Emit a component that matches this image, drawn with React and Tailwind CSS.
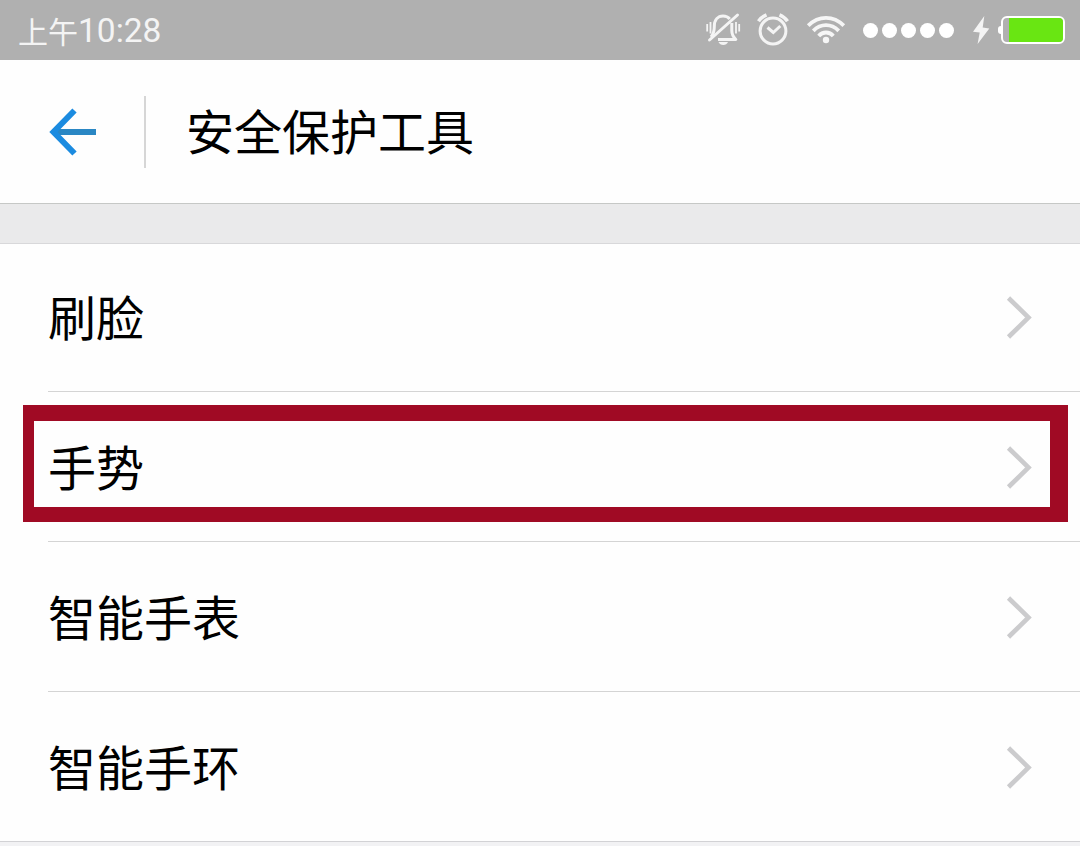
import React from 'react';

const tools = [
  { id: 'face', label: '刷脸' },
  { id: 'gesture', label: '手势', highlighted: true },
  { id: 'watch', label: '智能手表' },
  { id: 'band', label: '智能手环' },
];

const MuteIcon = () => (
  <svg className="w-10 h-[60px]" viewBox="0 0 40 60" fill="none" stroke="#f4f4f4" strokeWidth="3" aria-hidden="true">
    <path d="M7 37c2.500-3 3.300-5 3.300-10.500c0-6.500 3.600-10.500 8.700-10.500c3.300 0 5.300 1.200 6.800 3" />
    <path d="M27.800 23v7.500c0 4 1.500 6.500 4 9H14" strokeLinejoin="round" />
    <path d="M33.500 15L5.500 40" strokeWidth="3" strokeLinecap="round" />
    <path d="M14.500 42h9.500c-.8 2-2.600 3-4.700 3s-4-1-4.800-3z" fill="#f4f4f4" stroke="none" />
    <path d="M3.200 24v7.500M6.500 22v11.500M32 22v11.500M35.200 24v7.500" strokeWidth="1.800" />
  </svg>
);

const AlarmIcon = () => (
  <svg className="w-9 h-[60px]" viewBox="0 0 36 60" fill="none" stroke="#f4f4f4" strokeWidth="3" aria-hidden="true">
    <circle cx="17" cy="31" r="12.900" />
    <path d="M11.500 27.500l5.800 5l7-6.500" strokeWidth="3" />
    <path d="M2.500 21.300q3-4.500 8-6.500M31.500 21.300q-3-4.500-8-6.500" strokeWidth="3.600" />
  </svg>
);

const WifiIcon = () => (
  <svg className="w-10 h-[60px]" viewBox="0 0 40 60" fill="none" stroke="#f6f6f6" strokeWidth="3.8" aria-hidden="true">
    <path d="M2.200 25.700q7.800-7.800 17.800-7.800t17.800 7.800" />
    <path d="M7.300 30.800q5.500-5.600 12.700-5.600t12.700 5.600" />
    <path d="M12.700 36q3-3.500 7.300-3.500t7.300 3.500" />
    <circle cx="20" cy="40" r="3.200" fill="#f6f6f6" stroke="none" />
  </svg>
);

const BoltIcon = () => (
  <svg className="w-[18px] h-[60px]" viewBox="0 0 18 60" fill="#f4f4f4" aria-hidden="true">
    <path d="M12.300 16L1 31.800l6.700.8L5.600 44L17.300 28.600l-6.600-1z" />
  </svg>
);

const Battery = () => (
  <div className="flex items-center">
    <div className="w-[3px] h-2 rounded-l-sm bg-white" />
    <div className="w-16 h-7 rounded-md border-2 border-white pl-1.5">
      <div className="h-full rounded-r-sm bg-[#69e612]" />
    </div>
  </div>
);

const StatusBar = () => (
  <div className="flex h-[60px] items-center bg-[#b0b0b0] pl-[18px] pr-[15px] text-[#f4f4f4]">
    <div className="flex items-center leading-none">
      <span className="font-['Noto_Sans_CJK_SC',sans-serif] text-[30px] leading-[58px]">上午</span>
      <span className="font-['Roboto',sans-serif] text-[33.5px] leading-[60px] pt-0.5">10:28</span>
    </div>
    <div className="ml-auto flex items-center">
      <MuteIcon />
      <div className="ml-3"><AlarmIcon /></div>
      <div className="ml-3.5"><WifiIcon /></div>
      <div className="ml-[17px] flex gap-1 pt-px">
        {[0, 1, 2, 3, 4].map((dot) => (
          <div key={dot} className="size-[15px] rounded-full bg-white" />
        ))}
      </div>
      <div className="ml-[18px]"><BoltIcon /></div>
      <div className="ml-2"><Battery /></div>
    </div>
  </div>
);

const Header = () => (
  <header className="flex h-36 items-center border-b border-[#c6c8c6] bg-[#fefefe] pl-12">
    <button type="button" aria-label="返回">
      <svg className="w-12 h-12" viewBox="0 0 48 48" fill="none" strokeWidth="6" aria-hidden="true">
        <path d="M6 24h42" stroke="#2a87c4" />
        <path d="M26.500 2.500L5.500 24l21 21.500" stroke="#1b8be0" />
      </svg>
    </button>
    <div className="ml-12 h-[72px] w-0.5 bg-[#d6d6d6]" />
    <h1 className="ml-10 pb-1.5 text-[48px] leading-[72px]">安全保护工具</h1>
  </header>
);

const ToolRow = ({ label, highlighted, first, last }) => (
  <li className="relative">
    <button
      type="button"
      className={`flex w-full items-center text-left ${first ? 'h-[148px]' : 'h-[150px]'} ${last ? '' : 'pl-12'}`}
    >
      <span
        className={`flex h-full flex-1 items-center justify-between border-b pr-12 ${first ? 'pt-px' : 'pt-[3px]'} ${
          last ? 'border-[#d2d2d5] pl-12' : 'border-[#d4d4d4]'
        }`}
      >
        <span className="pb-1.5 text-[48px] leading-[72px]">{label}</span>
        <svg className="h-[44px] w-[26px]" viewBox="0 0 26 44" fill="none" stroke="#cbcbcd" strokeWidth="4.6" aria-hidden="true">
          <path d="M2.500 2l20 19.500L2.500 41" />
        </svg>
      </span>
    </button>
    {highlighted && (
      <div className="pointer-events-none absolute left-[23px] top-[13px] h-[117px] w-[1045px] border-b-[15px] border-t-[16px] border-l-[11px] border-r-[18px] border-[#a00a24]" />
    )}
  </li>
);

const App = () => {
  return (
    <main className="h-[846px] w-[1080px] overflow-hidden bg-[#f2f2f4] font-['Noto_Sans_CJK_SC',sans-serif] text-black">
      <StatusBar />
      <Header />
      <div className="h-10 border-b border-[#d8d8da] bg-[#eaeaeb]" />
      <ul className="bg-[#fefefe]">
        {tools.map((tool, index) => (
          <ToolRow
            key={tool.id}
            label={tool.label}
            highlighted={tool.highlighted}
            first={index === 0}
            last={index === tools.length - 1}
          />
        ))}
      </ul>
    </main>
  );
};

export default App;
